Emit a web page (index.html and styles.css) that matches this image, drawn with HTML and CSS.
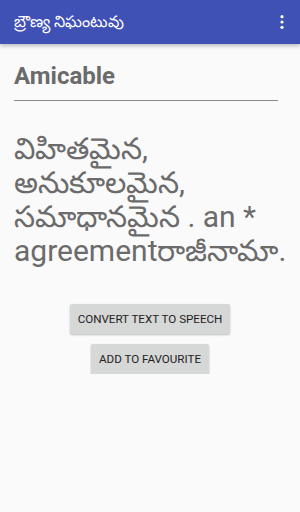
FILE: index.html
```html
<!doctype html>
<html lang="te">
  <head>
    <meta charset="UTF-8" />
    <meta name="viewport" content="width=device-width, initial-scale=1.0" />
    <title>బ్రౌణ్య నిఘంటువు</title>
    <link rel="stylesheet" href="styles.css">
  </head>
  <body>
    <header class="AppBar">
      <h1 class="AppBar-title">బ్రౌణ్య నిఘంటువు</h1>
      <svg class="AppBar-menu" width="4" height="14" viewBox="0 0 4 14">
        <circle cx="2" cy="1.7" r="1.6" fill="#fff" />
        <circle cx="2" cy="7" r="1.6" fill="#fff" />
        <circle cx="2" cy="12.3" r="1.6" fill="#fff" />
      </svg>
    </header>
    <main class="Content">
      <h2 class="Word">Amicable</h2>
      <p class="Meaning">విహితమైన, అనుకూలమైన, సమాధానమైన . an * agreementరాజీనామా.</p>
      <div class="Actions">
        <button class="Button">CONVERT TEXT TO SPEECH</button>
        <button class="Button">ADD TO FAVOURITE</button>
      </div>
    </main>
  </body>
</html>
```

FILE: styles.css
```css
:root {
  --color-primary: #3f51b5;
  --color-text: #6b6b6b;
  --color-bg: #fafafa;
}

body {
  margin: 0;
  font-family: Roboto, "Noto Sans", sans-serif;
  background-color: var(--color-bg);
  color: var(--color-text);
}

.AppBar {
  height: 44px;
  box-sizing: border-box;
  background-color: var(--color-primary);
  display: flex;
  align-items: center;
  justify-content: space-between;
  padding: 3px 16px 0 14px;
  box-shadow: 0 2px 4px rgba(0, 0, 0, 0.25);
}

.AppBar-title {
  margin: 0;
  font-size: 16px;
  font-weight: normal;
  color: #fff;
}

.AppBar-menu {
  margin-top: -3px;
}

.Content {
  padding: 0 14px;
}

.Word {
  margin: 18px 8px 0 0;
  padding-bottom: 10px;
  font-size: 24px;
  line-height: 28px;
  font-weight: bold;
  border-bottom: 1px solid #8a8a8a;
}

.Meaning {
  margin: 31px 0 0;
  font-size: 30px;
  line-height: 34px;
}

.Actions {
  display: flex;
  flex-direction: column;
  align-items: center;
  gap: 10px;
  margin-top: 36px;
}

.Button {
  border: none;
  border-radius: 2px;
  background-color: #d6d7d7;
  color: #222;
  font-family: Roboto, sans-serif;
  font-size: 11.6px;
  font-weight: normal;
  height: 30px;
  padding: 0 8px;
  box-shadow: 0 1px 2px rgba(0, 0, 0, 0.25);
}
```
